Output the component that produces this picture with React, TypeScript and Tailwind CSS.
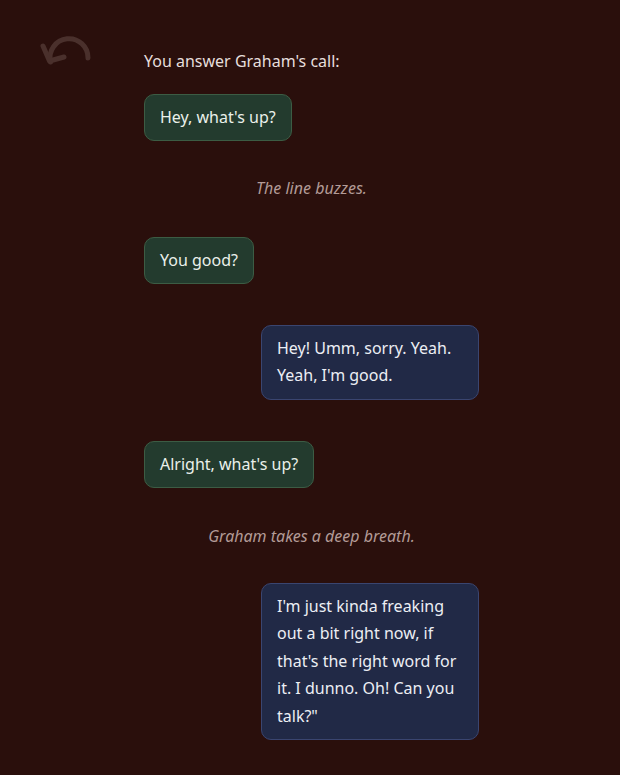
import React from "react";

type Entry =
  | { kind: "them"; text: string; gap: string }
  | { kind: "me"; text: string; gap: string }
  | { kind: "note"; text: string; gap: string };

const entries: Entry[] = [
  { kind: "them", text: "Hey, what's up?", gap: "mt-[18.5px]" },
  { kind: "note", text: "The line buzzes.", gap: "mt-[34px]" },
  { kind: "them", text: "You good?", gap: "mt-[34px]" },
  { kind: "me", text: "Hey! Umm, sorry. Yeah. Yeah, I'm good.", gap: "mt-[40.5px]" },
  { kind: "them", text: "Alright, what's up?", gap: "mt-[41px]" },
  { kind: "note", text: "Graham takes a deep breath.", gap: "mt-[34.5px]" },
  {
    kind: "me",
    text: "I'm just kinda freaking out a bit right now, if that's the right word for it. I dunno. Oh! Can you talk?\"",
    gap: "mt-[32.5px]",
  },
];

function UndoIcon() {
  return (
    <svg width="56" height="36" viewBox="0 0 56 36" fill="none" className="block">
      <path
        d="M50 26 A19 19 0 1 0 12.5 30"
        stroke="#4a302c"
        strokeWidth="5"
        strokeLinecap="round"
      />
      <path
        d="M5 14 L11.5 29 L26 25"
        stroke="#4a302c"
        strokeWidth="5"
        strokeLinecap="round"
        strokeLinejoin="round"
      />
    </svg>
  );
}

export default function App() {
  return (
    <div
      className="relative min-h-screen bg-[#2a0f0c] text-[16px] leading-[27.5px]"
      style={{ fontFamily: '"Noto Sans", "Open Sans", sans-serif' }}
    >
      <button type="button" aria-label="Undo" className="absolute left-[38px] top-[32px]">
        <UndoIcon />
      </button>
      <div className="ml-[144px] flex w-[335px] flex-col pt-[47.5px] pb-[34px]">
        <p className="text-[#e6dedc]">You answer Graham's call:</p>
        {entries.map((e, i) => {
          if (e.kind === "note") {
            return (
              <p key={i} className={`${e.gap} text-center italic text-[#b39b97]`}>
                {e.text}
              </p>
            );
          }
          const mine = e.kind === "me";
          return (
            <div key={i} className={`${e.gap} flex ${mine ? "justify-end" : "justify-start"}`}>
              <div
                className={
                  mine
                    ? "max-w-[218px] rounded-[10px] border border-[#3a4570] bg-[#212946] px-[15px] py-[9px] text-[#eceef4]"
                    : "max-w-[218px] rounded-[10px] border border-[#3c5c44] bg-[#233b2e] px-[15px] py-[9px] text-[#eaf0ea]"
                }
              >
                {e.text}
              </div>
            </div>
          );
        })}
      </div>
    </div>
  );
}
